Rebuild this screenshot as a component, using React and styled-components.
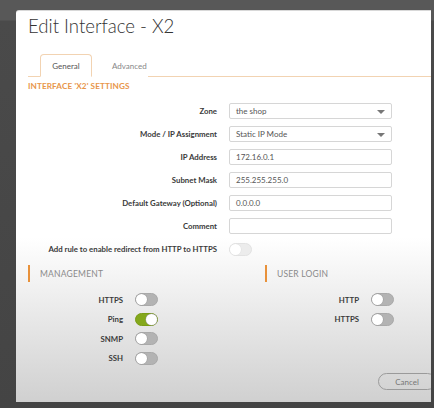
import React from "react";
import styled, { createGlobalStyle } from "styled-components";

const GlobalStyle = createGlobalStyle`
    body {
        margin: 0;
        background: #474747;
        font-family: Lato, "Open Sans", sans-serif;
    }
`;

const Page = styled.div`
    width: 434px;
    height: 408px;
    box-sizing: border-box;
    padding: 10px 0 0 16px;
    overflow: hidden;
    background: linear-gradient(#585858 0, #585858 20px, #4a4a4a 21px, #444 100%);
`;

const Dialog = styled.div`
    width: 415px;
    height: 392px;
    box-sizing: border-box;
    border-top: 1px solid #d8d8d8;
    border-top-left-radius: 3px;
    overflow: hidden;
    background: linear-gradient(#fff 0, #fff 58%, #d0d0d0 100%);
    display: flex;
    flex-direction: column;
`;

const Title = styled.h1`
    margin: 3px 0 0 12px;
    font-size: 18.6px;
    line-height: 24px;
    font-weight: 300;
    color: #333;
`;

const TabBar = styled.div`
    margin: 15px 0 0 12px;
    padding-left: 12px;
    display: flex;
    align-items: flex-end;
    border-bottom: 1px solid #f2d3b2;
    height: 23px;
`;

const Tab = styled.div`
    width: ${(p) => (p.$active ? "52px" : "auto")};
    height: 23px;
    box-sizing: border-box;
    margin-bottom: -1px;
    padding: ${(p) => (p.$active ? "0" : "0 0 0 19px")};
    display: flex;
    align-items: center;
    justify-content: ${(p) => (p.$active ? "center" : "flex-start")};
    font-size: 8px;
    color: ${(p) => (p.$active ? "#555" : "#888")};
    background: #fff;
    border: 1px solid ${(p) => (p.$active ? "#f2d3b2" : "transparent")};
    border-bottom-color: ${(p) => (p.$active ? "#fff" : "transparent")};
    border-radius: 4px 4px 0 0;
`;

const SectionTitle = styled.div`
    margin: 4px 0 0 12px;
    font-size: 8.2px;
    font-weight: 700;
    color: #e8964a;
    letter-spacing: 0.1px;
`;

const Form = styled.div`
    margin-top: 12px;
    display: grid;
    grid-template-columns: 201px 163px;
    grid-auto-rows: 16px;
    column-gap: 12px;
    row-gap: 7px;
`;

const Label = styled.div`
    display: flex;
    align-items: center;
    justify-content: flex-end;
    font-size: 7.8px;
    font-weight: 700;
    color: #3a3a3a;
    white-space: nowrap;
`;

const Field = styled.div`
    position: relative;
    box-sizing: border-box;
    height: 16px;
    border: 1px solid #d6d6d6;
    border-radius: 2px;
    background: #fff;
    padding-left: 6px;
    display: flex;
    align-items: center;
    font-size: 8px;
    color: #555;
`;

const Caret = styled.span`
    position: absolute;
    right: 6px;
    top: 6px;
    width: 0;
    height: 0;
    border-left: 4px solid transparent;
    border-right: 4px solid transparent;
    border-top: 4px solid #777;
`;

const ToggleCell = styled.div`
    display: flex;
    align-items: center;
`;

const Track = styled.span`
    position: relative;
    display: block;
    width: 23px;
    height: 13px;
    box-sizing: border-box;
    border-radius: 7px;
    border: 1px solid ${(p) => (p.$on ? "#7a9c16" : p.$faint ? "#e2e2e2" : "#a9a9a9")};
    background: ${(p) => (p.$on ? "#84a81c" : p.$faint ? "#ececec" : "#b3b3b3")};
`;

const Knob = styled.span`
    position: absolute;
    top: 0;
    left: ${(p) => (p.$on ? "10px" : "0")};
    width: 11px;
    height: 11px;
    border-radius: 50%;
    background: #fff;
    box-shadow: 0 0 0 0.5px ${(p) => (p.$faint ? "#e0e0e0" : "#999")};
`;

const Toggle = ({ on, faint }) => (
    <Track $on={on} $faint={faint}>
        <Knob $on={on} $faint={faint} />
    </Track>
);

const Groups = styled.div`
    margin: 8px 0 0 12px;
    display: grid;
    grid-template-columns: 237px 1fr;
`;

const Group = styled.div`
    display: flex;
    flex-direction: column;
`;

const GroupHead = styled.div`
    height: 17px;
    border-left: 2px solid #e8913a;
    padding-left: 10px;
    display: flex;
    align-items: center;
    font-size: 8.5px;
    color: #8a8a8a;
    letter-spacing: 0.2px;
`;

const Switches = styled.div`
    margin-top: 11px;
    display: grid;
    grid-template-columns: ${(p) => p.$labelWidth}px 23px;
    grid-auto-rows: 13px;
    column-gap: 12px;
    row-gap: 6.5px;
`;

const Footer = styled.div`
    margin-top: auto;
    margin-bottom: 12px;
    padding-left: 362px;
    display: flex;
`;

const CancelButton = styled.div`
    flex: none;
    width: 58px;
    height: 17px;
    box-sizing: border-box;
    border: 1px solid #9a9a9a;
    border-radius: 9px;
    display: flex;
    align-items: center;
    justify-content: center;
    font-size: 8px;
    color: #777;
`;

const fields = [
    { label: "Zone", value: "the shop", select: true },
    { label: "Mode / IP Assignment", value: "Static IP Mode", select: true },
    { label: "IP Address", value: "172.16.0.1" },
    { label: "Subnet Mask", value: "255.255.255.0" },
    { label: "Default Gateway (Optional)", value: "0.0.0.0" },
    { label: "Comment", value: "" },
];

const management = [
    { label: "HTTPS", on: false },
    { label: "Ping", on: true },
    { label: "SNMP", on: false },
    { label: "SSH", on: false },
];

const userLogin = [
    { label: "HTTP", on: false },
    { label: "HTTPS", on: false },
];

const App = () => {
    return (
        <>
            <GlobalStyle />
            <Page>
                <Dialog>
                    <Title>Edit Interface - X2</Title>
                    <TabBar>
                        <Tab $active>General</Tab>
                        <Tab>Advanced</Tab>
                    </TabBar>
                    <SectionTitle>INTERFACE 'X2' SETTINGS</SectionTitle>
                    <Form>
                        {fields.map((f) => (
                            <React.Fragment key={f.label}>
                                <Label>{f.label}</Label>
                                <Field>
                                    {f.value}
                                    {f.select && <Caret />}
                                </Field>
                            </React.Fragment>
                        ))}
                        <Label>Add rule to enable redirect from HTTP to HTTPS</Label>
                        <ToggleCell>
                            <Toggle faint />
                        </ToggleCell>
                    </Form>
                    <Groups>
                        <Group>
                            <GroupHead>MANAGEMENT</GroupHead>
                            <Switches $labelWidth={95}>
                                {management.map((m) => (
                                    <React.Fragment key={m.label}>
                                        <Label>{m.label}</Label>
                                        <Toggle on={m.on} />
                                    </React.Fragment>
                                ))}
                            </Switches>
                        </Group>
                        <Group>
                            <GroupHead>USER LOGIN</GroupHead>
                            <Switches $labelWidth={94}>
                                {userLogin.map((m) => (
                                    <React.Fragment key={m.label}>
                                        <Label>{m.label}</Label>
                                        <Toggle on={m.on} />
                                    </React.Fragment>
                                ))}
                            </Switches>
                        </Group>
                    </Groups>
                    <Footer>
                        <CancelButton>Cancel</CancelButton>
                    </Footer>
                </Dialog>
            </Page>
        </>
    );
};

export default App;
